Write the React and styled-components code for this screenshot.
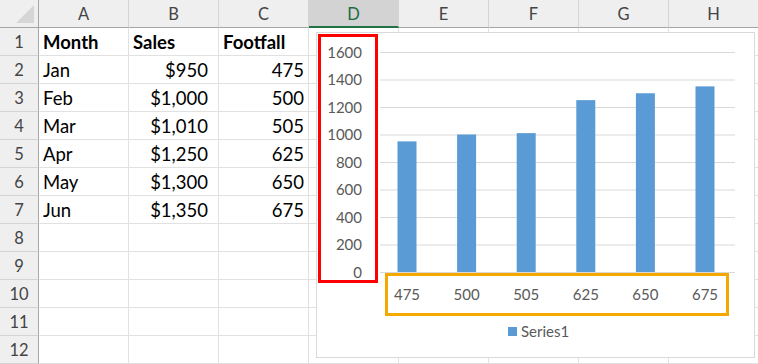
import styled, { createGlobalStyle } from "styled-components";

const GlobalStyle = createGlobalStyle`
  html, body {
    margin: 0;
    padding: 0;
    background: #ffffff;
    overflow: hidden;
  }
  body {
    font-family: Lato, "Liberation Sans", sans-serif;
  }
`;

const Sheet = styled.div`
  position: relative;
  width: 758px;
  height: 364px;
  overflow: hidden;
  display: grid;
  grid-template-columns: 39px repeat(8, 90px);
  grid-template-rows: 28px repeat(12, 28px);
`;

const Corner = styled.div`
  position: relative;
  background: #efefef;
  border-right: 1px solid #a6a6a6;
  border-bottom: 1px solid #a6a6a6;
  box-sizing: border-box;

  &::after {
    content: "";
    position: absolute;
    right: 4px;
    bottom: 4px;
    width: 0;
    height: 0;
    border-left: 18px solid transparent;
    border-bottom: 18px solid #d6d6d6;
  }
`;

const ColHead = styled.div`
  box-sizing: border-box;
  display: flex;
  align-items: center;
  justify-content: center;
  background: ${(p) => (p.$active ? "#d3d3d3" : "#efefef")};
  color: ${(p) => (p.$active ? "#1e6b41" : "#444444")};
  border-right: 1px solid #d4d4d4;
  border-bottom: ${(p) => (p.$active ? "2px solid #217346" : "1px solid #a6a6a6")};
  font-size: 16.5px;
  padding-top: ${(p) => (p.$active ? "1px" : "0")};
`;

const RowHead = styled.div`
  box-sizing: border-box;
  display: flex;
  align-items: center;
  justify-content: center;
  background: #efefef;
  color: #444444;
  border-right: 1px solid #a6a6a6;
  border-bottom: 1px solid #d4d4d4;
  font-size: 16.5px;
`;

const Cell = styled.div`
  box-sizing: border-box;
  display: flex;
  align-items: center;
  justify-content: ${(p) => (p.$right ? "flex-end" : "flex-start")};
  padding: 0 ${(p) => p.$padRight || 4}px 0 4px;
  border-right: 1px solid #e1e1e1;
  border-bottom: 1px solid #e1e1e1;
  font-size: 18.5px;
  font-weight: ${(p) => (p.$bold ? 700 : 400)};
  color: #000000;
  white-space: nowrap;
`;

const ChartBox = styled.div`
  position: absolute;
  left: 316px;
  top: 32px;
  width: 439px;
  height: 326px;
  box-sizing: border-box;
  background: #ffffff;
  border: 1px solid #d9d9d9;
`;

const cols = ["A", "B", "C", "D", "E", "F", "G", "H"];

const data = [
  ["Jan", "$950", "475", 950],
  ["Feb", "$1,000", "500", 1000],
  ["Mar", "$1,010", "505", 1010],
  ["Apr", "$1,250", "625", 1250],
  ["May", "$1,300", "650", 1300],
  ["Jun", "$1,350", "675", 1350],
];

const ZERO_Y = 239;
const STEP = 27.5;
const scale = STEP / 200;
const FONT = "Lato, 'Liberation Sans', sans-serif";

const Chart = () => {
  const ticks = [0, 200, 400, 600, 800, 1000, 1200, 1400, 1600];
  return (
    <ChartBox>
      <svg width="437" height="324" viewBox="0 0 437 324" style={{ display: "block" }}>
        {ticks.map((t, i) => (
          <g key={t}>
            <line
              x1="63"
              x2="418"
              y1={ZERO_Y - i * STEP + 0.5}
              y2={ZERO_Y - i * STEP + 0.5}
              stroke="#d9d9d9"
              strokeWidth="1"
            />
            <text x="45" y={ZERO_Y - i * STEP + 5.5} textAnchor="end" fontFamily={FONT} fontSize="15" fill="#595959">
              {t}
            </text>
          </g>
        ))}
        {data.map((d, i) => {
          const cx = 90 + i * 59.6;
          const h = d[3] * scale;
          return (
            <g key={d[0]}>
              <rect x={cx - 9.5} y={ZERO_Y - h} width="19" height={h} fill="#5b9bd5" />
              <text x={cx} y="267" textAnchor="middle" fontFamily={FONT} fontSize="15" fill="#595959">
                {d[2]}
              </text>
            </g>
          );
        })}
        {/* annotation boxes */}
        <rect x="2.5" y="2.5" width="57" height="246" fill="none" stroke="#ff0000" strokeWidth="3" />
        <rect x="69.5" y="241.5" width="341" height="40" fill="none" stroke="#f5a800" strokeWidth="3" />
        <rect x="191" y="294" width="9" height="9" fill="#5b9bd5" />
        <text x="204" y="304" fontFamily={FONT} fontSize="15" fill="#595959">
          Series1
        </text>
      </svg>
    </ChartBox>
  );
};

const cellProps = (r, c) => {
  if (r === 1 && c < 3) return { text: ["Month", "Sales", "Footfall"][c], bold: true };
  if (r >= 2 && r <= 7 && c < 3) {
    return { text: data[r - 2][c], right: c > 0, padRight: c === 1 ? 10 : 4 };
  }
  return { text: "" };
};

const App = () => {
  const rowNums = Array.from({ length: 12 }, (_, i) => i + 1);

  return (
    <>
      <GlobalStyle />
      <Sheet>
        <Corner />
        {cols.map((c) => (
          <ColHead key={c} $active={c === "D"}>
            {c}
          </ColHead>
        ))}
        {rowNums.map((r) => [
          <RowHead key={"h" + r}>{r}</RowHead>,
          ...cols.map((col, c) => {
            const p = cellProps(r, c);
            return (
              <Cell key={col + r} $right={p.right} $bold={p.bold} $padRight={p.padRight}>
                {p.text}
              </Cell>
            );
          }),
        ])}
        <Chart />
      </Sheet>
    </>
  );
};

export default App;
